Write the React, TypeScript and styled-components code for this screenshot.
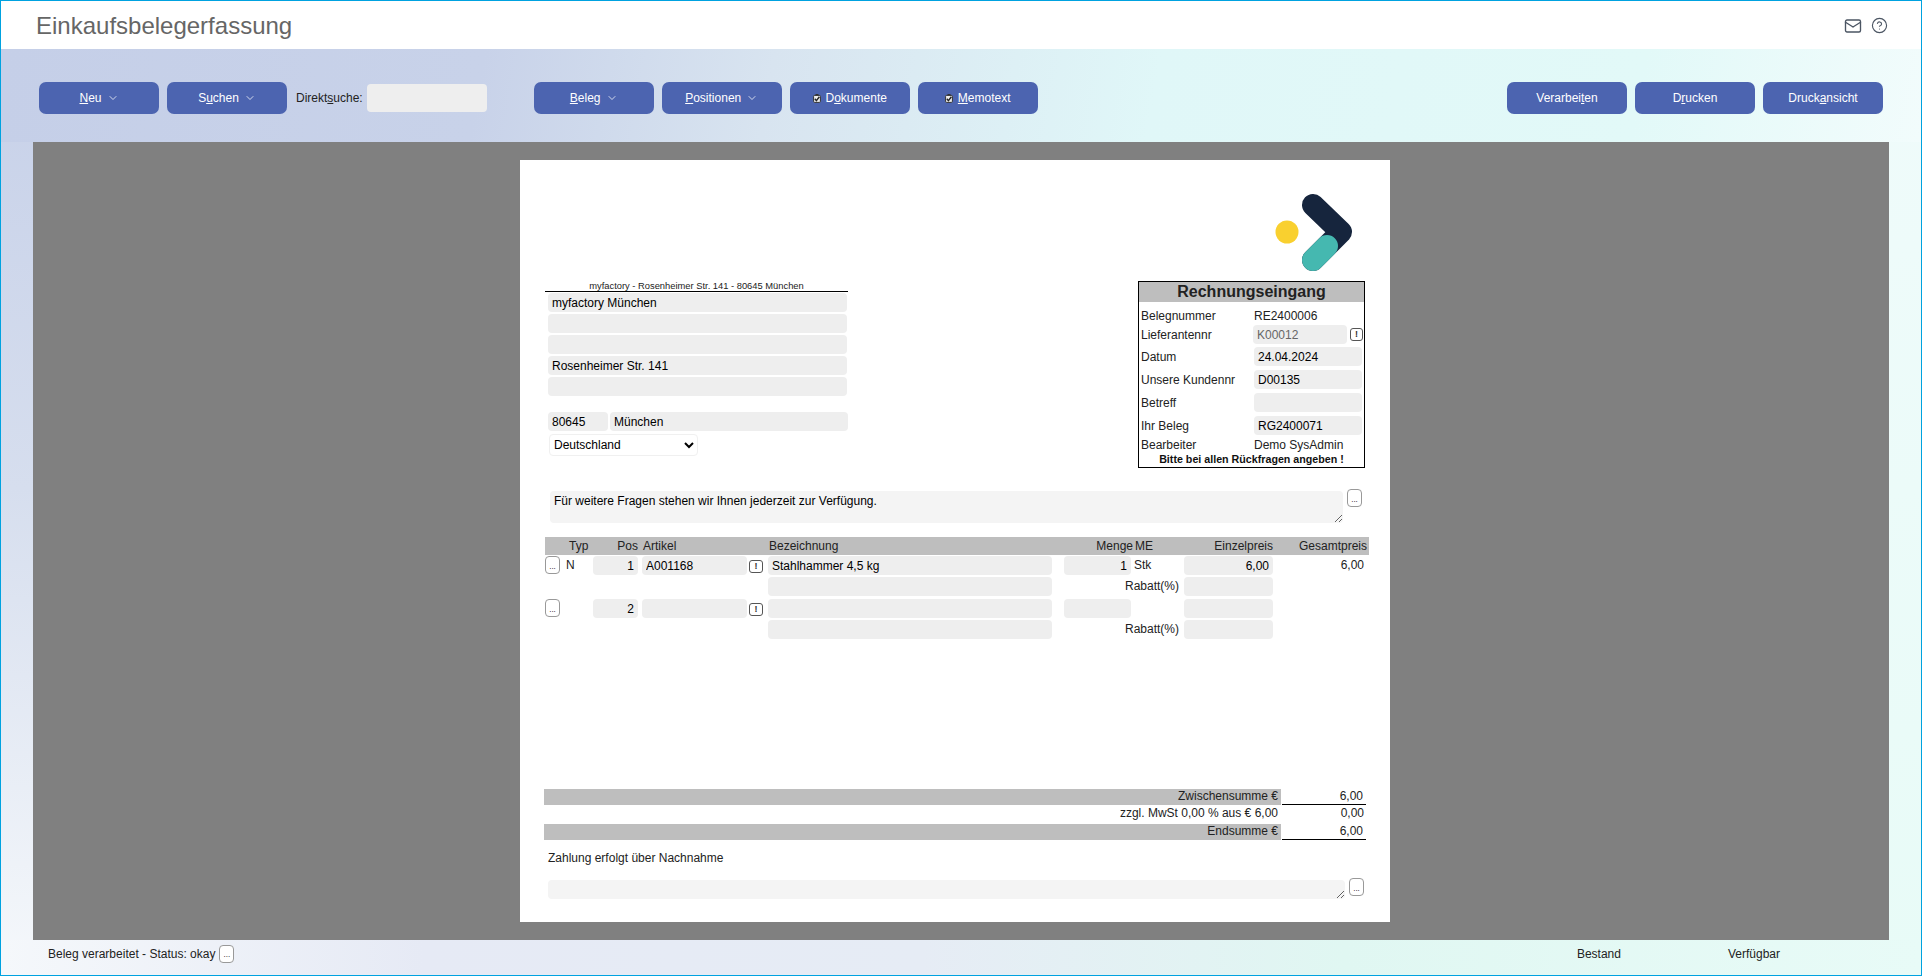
import React from "react";
import styled, { createGlobalStyle, css } from "styled-components";
import { ChevronDown, CircleHelp, Mail } from "lucide-react";

const GlobalStyle = createGlobalStyle`
  html, body {
    margin: 0;
    padding: 0;
    overflow: hidden;
  }
  body {
    font-family: "Liberation Sans", Arial, sans-serif;
    font-size: 12px;
    color: #222;
  }
  * {
    box-sizing: border-box;
  }
`;

const Shell = styled.div`
  display: flex;
  flex-direction: column;
  width: 1922px;
  height: 976px;
  border: 1px solid #00a2e0;
  background:
    linear-gradient(180deg, #c5cfe8 0%, #d6deee 50%, #f5f8fb 100%) 0 0 / 33px 100% no-repeat,
    linear-gradient(180deg, #f0fbfb 0%, #e8fbf7 100%) 100% 0 / 33px 100% no-repeat,
    #808080;
`;

const Header = styled.header`
  display: flex;
  align-items: center;
  justify-content: space-between;
  flex: none;
  height: 48px;
  padding: 1px 33px 0 35px;
  background: #fff;
`;

const Title = styled.h1`
  margin: 0;
  font-size: 24px;
  font-weight: normal;
  color: #666;
`;

const HeaderIcons = styled.div`
  display: flex;
  align-items: center;
  gap: 9px;
  color: #4b5563;
`;

const Toolbar = styled.div`
  display: flex;
  align-items: flex-start;
  flex: none;
  height: 93px;
  padding: 33px 38px 0;
  background: linear-gradient(100deg, #c5cfe8 0%, #c8d2e9 25%, #d8e4f0 40%, #e0f7f8 60%, #e2f9f8 85%, #f2fcfc 100%);
`;

const ToolGroup = styled.div<{ $left?: number; $auto?: boolean }>`
  display: flex;
  align-items: center;
  gap: 8px;
  margin-left: ${(p) => (p.$auto ? "auto" : `${p.$left ?? 0}px`)};
`;

const ToolButton = styled.button`
  display: flex;
  align-items: center;
  justify-content: center;
  gap: 5px;
  width: 120px;
  height: 32px;
  padding: 0;
  border: none;
  border-radius: 7px;
  background: #4c64b0;
  color: #fff;
  font: 12px "Liberation Sans", Arial, sans-serif;
`;

const Direct = styled.label`
  margin: 0 4px 0 1px;
  color: #222;
`;

const DirectInput = styled.input`
  width: 120px;
  height: 28px;
  margin-top: 2px;
  border: none;
  border-radius: 4px;
  background: #eee;
`;

const Workspace = styled.main`
  flex: none;
  height: 798px;
  margin: 0 32px;
  padding: 18px 0 0 487px;
  background: #808080;
`;

const Sheet = styled.section`
  width: 870px;
  height: 762px;
  background: #fff;
`;

const LogoRow = styled.div`
  display: flex;
  justify-content: flex-end;
  height: 121px;
  padding: 34px 38px 0 0;
`;

const AddressRow = styled.div`
  display: flex;
  justify-content: space-between;
  height: 187px;
  padding: 0 25px;
`;

const AddressColumn = styled.div`
  display: flex;
  flex-direction: column;
  width: 303px;
`;

const Sender = styled.div`
  height: 11px;
  border-bottom: 1px solid #000;
  font-size: 9.35px;
  line-height: 11px;
  text-align: center;
`;

const AddressLines = styled.div`
  display: flex;
  flex-direction: column;
  gap: 2px;
  margin: 1px 1px 0 3px;
`;

const fieldBase = css`
  height: 19px;
  padding: 0 4px;
  border: none;
  border-radius: 4px;
  background: #eee;
  color: #000;
  font: 12px "Liberation Sans", Arial, sans-serif;
  outline: none;
`;

const Field = styled.input<{ $w?: number; $right?: boolean; $muted?: boolean; $shift?: number }>`
  ${fieldBase};
  width: ${(p) => (p.$w ? `${p.$w}px` : "100%")};
  margin-left: ${(p) => p.$shift ?? 0}px;
  text-align: ${(p) => (p.$right ? "right" : "left")};
  color: ${(p) => (p.$muted ? "#666" : "#000")};
`;

const CityRow = styled.div`
  display: flex;
  gap: 2px;
  margin: 16px 0 0 3px;
`;

const CountrySelect = styled.select`
  width: 149px;
  height: 22px;
  margin: 3px 0 0 4px;
  padding-left: 0;
  border: 1px solid #f0f0f0;
  border-radius: 4px;
  background: #fff;
  color: #000;
  font: 12px "Liberation Sans", Arial, sans-serif;
`;

const InfoBox = styled.div`
  display: flex;
  flex-direction: column;
  width: 227px;
  height: 187px;
  border: 1px solid #000;
`;

const InfoTitle = styled.div`
  height: 20px;
  background: #bebebe;
  font-size: 16px;
  font-weight: bold;
  line-height: 20px;
  text-align: center;
`;

const InfoRow = styled.div<{ $top?: number; $h?: number }>`
  display: grid;
  grid-template-columns: 113px 1fr;
  align-items: center;
  height: ${(p) => p.$h ?? 19}px;
  margin-top: ${(p) => p.$top ?? 0}px;
  padding: 0 2px;
`;

const InfoValue = styled.div`
  display: flex;
  align-items: center;
  gap: 3px;
`;

const InfoNote = styled.div`
  margin-top: -1px;
  font-size: 10.7px;
  font-weight: bold;
  line-height: 13px;
  text-align: center;
  color: #111;
`;

const NoteRow = styled.div<{ $top: number; $left: number }>`
  display: flex;
  align-items: flex-start;
  gap: 4px;
  margin-top: ${(p) => p.$top}px;
  padding-left: ${(p) => p.$left}px;
`;

const NoteArea = styled.textarea<{ $w: number; $h: number }>`
  display: block;
  width: ${(p) => p.$w}px;
  height: ${(p) => p.$h}px;
  margin-top: 2px;
  padding: 3px 4px;
  border: none;
  border-radius: 4px;
  background: #f4f4f4;
  color: #000;
  font: 12px/14px "Liberation Sans", Arial, sans-serif;
  overflow: hidden;
  outline: none;
`;

const DotsButton = styled.button`
  flex: none;
  width: 15px;
  height: 18px;
  padding: 3px 0 0;
  border: 1px solid #999;
  border-radius: 4px;
  background: #fff;
  color: #000;
  font: 8px/12px "Liberation Sans", Arial, sans-serif;
`;

const BangButton = styled.button<{ $w?: number }>`
  flex: none;
  width: ${(p) => p.$w ?? 14}px;
  height: 13px;
  padding: 0;
  border: 1px solid #555;
  border-radius: 3px;
  background: #fff;
  color: #333;
  font: bold 9px/11px "Liberation Sans", Arial, sans-serif;
`;

const ItemTable = styled.div`
  width: 824px;
  margin: 14px 0 0 25px;
`;

const columns = css`
  display: grid;
  grid-template-columns: 15px 33px 49px 107px 19px 296px 70px 50px 89px 96px;
`;

const TableHead = styled.div`
  ${columns};
  height: 18px;
  background: #bebebe;
  line-height: 18px;
`;

const HeadCell = styled.div<{ $col: number; $right?: boolean; $pl?: number; $pr?: number }>`
  grid-column: ${(p) => p.$col};
  padding-left: ${(p) => p.$pl ?? 0}px;
  padding-right: ${(p) => p.$pr ?? 0}px;
  text-align: ${(p) => (p.$right ? "right" : "left")};
`;

const Positions = styled.div`
  display: flex;
  flex-direction: column;
  gap: 3px;
  padding-top: 1px;
`;

const PositionGrid = styled.div`
  ${columns};
  grid-template-rows: 19px 19px;
  row-gap: 2px;
  align-items: center;
`;

const Cell = styled.div<{ $col: string; $row: number }>`
  grid-column: ${(p) => p.$col};
  grid-row: ${(p) => p.$row};
`;

const TextCell = styled(Cell)<{ $right?: boolean; $pl?: number; $pr?: number }>`
  padding: 0 ${(p) => p.$pr ?? 0}px 2px ${(p) => p.$pl ?? 0}px;
  text-align: ${(p) => (p.$right ? "right" : "left")};
`;

const DotsCell = styled(DotsButton)`
  grid-column: 1;
  grid-row: 1;
  align-self: start;
`;

const Totals = styled.div`
  width: 822px;
  margin: 150px 0 0 24px;
`;

const TotalRow = styled.div<{ $h: number }>`
  display: grid;
  grid-template-columns: 737px 85px;
  height: ${(p) => p.$h}px;
  line-height: 15px;
`;

const TotalLabel = styled.div<{ $bar?: boolean }>`
  padding-right: 3px;
  background: ${(p) => (p.$bar ? "#bebebe" : "transparent")};
  line-height: ${(p) => (p.$bar ? "15px" : "18px")};
  text-align: right;
`;

const TotalValue = styled.div<{ $line?: boolean }>`
  margin-left: 1px;
  padding-right: ${(p) => (p.$line ? 3 : 2)}px;
  border-bottom: ${(p) => (p.$line ? "1px solid #000" : "none")};
  line-height: ${(p) => (p.$line ? "15px" : "18px")};
  text-align: right;
`;

const PayNote = styled.div`
  height: 18px;
  margin-top: 10px;
  padding-left: 28px;
  line-height: 18px;
`;

const StatusBar = styled.footer`
  display: flex;
  align-items: center;
  flex: 1;
  padding: 0 141px 8px 47px;
  background: linear-gradient(90deg, #f5f8fb 0%, #e6eaf5 22%, #e6ecf5 48%, #e0f7f2 70%, #e8fbf7 100%);
`;

const StatusText = styled.span`
  margin: 1px 4px 0 0;
`;

const StockLabels = styled.div`
  display: flex;
  gap: 107px;
  margin-left: auto;
`;

const Logo = () => (
  <svg width="77" height="77" viewBox="0 0 77 77">
    <circle cx="12" cy="38" r="11.5" fill="#f9d02f" />
    <polyline
      points="38,11 66,38 38,66"
      fill="none"
      stroke="#16253d"
      strokeWidth="22"
      strokeLinecap="round"
      strokeLinejoin="round"
    />
    <line x1="38" y1="66" x2="52" y2="52" stroke="#45b8b0" strokeWidth="22" strokeLinecap="round" />
  </svg>
);

const CheckMark = () => (
  <svg width="8" height="9" viewBox="0 0 8 9">
    <rect x="2.5" y="0" width="3" height="2" fill="#333" />
    <rect x="0.6" y="1.4" width="6.8" height="7" rx="1" fill="#eee" stroke="#333" strokeWidth="1" />
    <path d="M1.8 4.8 3.4 6.6 6.4 2.8" fill="none" stroke="#222" strokeWidth="1.4" />
  </svg>
);

const Menu = ({ children }: { children: React.ReactNode }) => (
  <ToolButton>
    <span>{children}</span>
    <ChevronDown size={12} strokeWidth={1.5} />
  </ToolButton>
);

const App = () => {
  return (
    <Shell>
      <GlobalStyle />
      <Header>
        <Title>Einkaufsbelegerfassung</Title>
        <HeaderIcons>
          <Mail size={18} strokeWidth={1.8} />
          <CircleHelp size={17} strokeWidth={1.6} />
        </HeaderIcons>
      </Header>

      <Toolbar>
        <ToolGroup>
          <Menu>
            <u>N</u>eu
          </Menu>
          <Menu>
            S<u>u</u>chen
          </Menu>
          <Direct>
            Direkt<u>s</u>uche:
          </Direct>
        </ToolGroup>
        <DirectInput />
        <ToolGroup $left={47}>
          <Menu>
            <u>B</u>eleg
          </Menu>
          <Menu>
            <u>P</u>ositionen
          </Menu>
          <ToolButton>
            <CheckMark />
            <span>
              D<u>o</u>kumente
            </span>
          </ToolButton>
          <ToolButton>
            <CheckMark />
            <span>
              <u>M</u>emotext
            </span>
          </ToolButton>
        </ToolGroup>
        <ToolGroup $auto>
          <ToolButton>
            <span>
              Verarbei<u>t</u>en
            </span>
          </ToolButton>
          <ToolButton>
            <span>
              D<u>r</u>ucken
            </span>
          </ToolButton>
          <ToolButton>
            <span>
              Druck<u>a</u>nsicht
            </span>
          </ToolButton>
        </ToolGroup>
      </Toolbar>

      <Workspace>
        <Sheet>
          <LogoRow>
            <Logo />
          </LogoRow>

          <AddressRow>
            <AddressColumn>
              <Sender>myfactory - Rosenheimer Str. 141 - 80645 München</Sender>
              <AddressLines>
                <Field readOnly value="myfactory München" />
                <Field readOnly value="" />
                <Field readOnly value="" />
                <Field readOnly value="Rosenheimer Str. 141" />
                <Field readOnly value="" />
              </AddressLines>
              <CityRow>
                <Field readOnly $w={60} value="80645" />
                <Field readOnly $w={238} value="München" />
              </CityRow>
              <CountrySelect defaultValue="de">
                <option value="de">Deutschland</option>
              </CountrySelect>
            </AddressColumn>

            <InfoBox>
              <InfoTitle>Rechnungseingang</InfoTitle>
              <InfoRow $top={4} $h={19}>
                <span>Belegnummer</span>
                <span>RE2400006</span>
              </InfoRow>
              <InfoRow>
                <span>Lieferantennr</span>
                <InfoValue>
                  <Field readOnly $w={94} $shift={-1} $muted value="K00012" />
                  <BangButton $w={13}>!</BangButton>
                </InfoValue>
              </InfoRow>
              <InfoRow $top={3}>
                <span>Datum</span>
                <Field readOnly value="24.04.2024" />
              </InfoRow>
              <InfoRow $top={4}>
                <span>Unsere Kundennr</span>
                <Field readOnly value="D00135" />
              </InfoRow>
              <InfoRow $top={4}>
                <span>Betreff</span>
                <Field readOnly value="" />
              </InfoRow>
              <InfoRow $top={4}>
                <span>Ihr Beleg</span>
                <Field readOnly value="RG2400071" />
              </InfoRow>
              <InfoRow $h={19}>
                <span>Bearbeiter</span>
                <span>Demo SysAdmin</span>
              </InfoRow>
              <InfoNote>Bitte bei allen Rückfragen angeben !</InfoNote>
            </InfoBox>
          </AddressRow>

          <NoteRow $top={21} $left={30}>
            <NoteArea $w={793} $h={32} readOnly value="Für weitere Fragen stehen wir Ihnen jederzeit zur Verfügung." />
            <DotsButton>...</DotsButton>
          </NoteRow>

          <ItemTable>
            <TableHead>
              <HeadCell $col={2} $pl={9}>Typ</HeadCell>
              <HeadCell $col={3} $right $pr={4}>Pos</HeadCell>
              <HeadCell $col={4} $pl={1}>Artikel</HeadCell>
              <HeadCell $col={6} $pl={1}>Bezeichnung</HeadCell>
              <HeadCell $col={7} $right $pr={1}>Menge</HeadCell>
              <HeadCell $col={8} $pl={1}>ME</HeadCell>
              <HeadCell $col={9} $right>Einzelpreis</HeadCell>
              <HeadCell $col={10} $right $pr={2}>Gesamtpreis</HeadCell>
            </TableHead>
            <Positions>
              <PositionGrid>
                <DotsCell>...</DotsCell>
                <TextCell $col="2" $row={1} $pl={6}>N</TextCell>
                <Cell $col="3" $row={1}>
                  <Field readOnly $w={45} $right value="1" />
                </Cell>
                <Cell $col="4" $row={1}>
                  <Field readOnly $w={105} value="A001168" />
                </Cell>
                <Cell $col="5" $row={1}>
                  <BangButton>!</BangButton>
                </Cell>
                <Cell $col="6" $row={1}>
                  <Field readOnly $w={284} value="Stahlhammer 4,5 kg" />
                </Cell>
                <Cell $col="7" $row={1}>
                  <Field readOnly $w={67} $right value="1" />
                </Cell>
                <TextCell $col="8" $row={1}>Stk</TextCell>
                <Cell $col="9" $row={1}>
                  <Field readOnly $right value="6,00" />
                </Cell>
                <TextCell $col="10" $row={1} $right $pr={5}>6,00</TextCell>
                <Cell $col="6" $row={2}>
                  <Field readOnly $w={284} value="" />
                </Cell>
                <TextCell $col="7 / span 2" $row={2} $right $pr={5}>Rabatt(%)</TextCell>
                <Cell $col="9" $row={2}>
                  <Field readOnly $right value="" />
                </Cell>
              </PositionGrid>
              <PositionGrid>
                <DotsCell>...</DotsCell>
                <Cell $col="3" $row={1}>
                  <Field readOnly $w={45} $right value="2" />
                </Cell>
                <Cell $col="4" $row={1}>
                  <Field readOnly $w={105} value="" />
                </Cell>
                <Cell $col="5" $row={1}>
                  <BangButton>!</BangButton>
                </Cell>
                <Cell $col="6" $row={1}>
                  <Field readOnly $w={284} value="" />
                </Cell>
                <Cell $col="7" $row={1}>
                  <Field readOnly $w={67} $right value="" />
                </Cell>
                <Cell $col="9" $row={1}>
                  <Field readOnly $right value="" />
                </Cell>
                <Cell $col="6" $row={2}>
                  <Field readOnly $w={284} value="" />
                </Cell>
                <TextCell $col="7 / span 2" $row={2} $right $pr={5}>Rabatt(%)</TextCell>
                <Cell $col="9" $row={2}>
                  <Field readOnly $right value="" />
                </Cell>
              </PositionGrid>
            </Positions>
          </ItemTable>

          <Totals>
            <TotalRow $h={15}>
              <TotalLabel $bar>Zwischensumme €</TotalLabel>
              <TotalValue $line>6,00</TotalValue>
            </TotalRow>
            <TotalRow $h={20}>
              <TotalLabel>zzgl. MwSt 0,00 % aus € 6,00</TotalLabel>
              <TotalValue>0,00</TotalValue>
            </TotalRow>
            <TotalRow $h={15}>
              <TotalLabel $bar>Endsumme €</TotalLabel>
              <TotalValue $line>6,00</TotalValue>
            </TotalRow>
          </Totals>

          <PayNote>Zahlung erfolgt über Nachnahme</PayNote>
          <NoteRow $top={11} $left={28}>
            <NoteArea $w={797} $h={19} readOnly value="" />
            <DotsButton>...</DotsButton>
          </NoteRow>
        </Sheet>
      </Workspace>

      <StatusBar>
        <StatusText>Beleg verarbeitet - Status: okay</StatusText>
        <DotsButton>...</DotsButton>
        <StockLabels>
          <span>Bestand</span>
          <span>Verfügbar</span>
        </StockLabels>
      </StatusBar>
    </Shell>
  );
};

export default App;
